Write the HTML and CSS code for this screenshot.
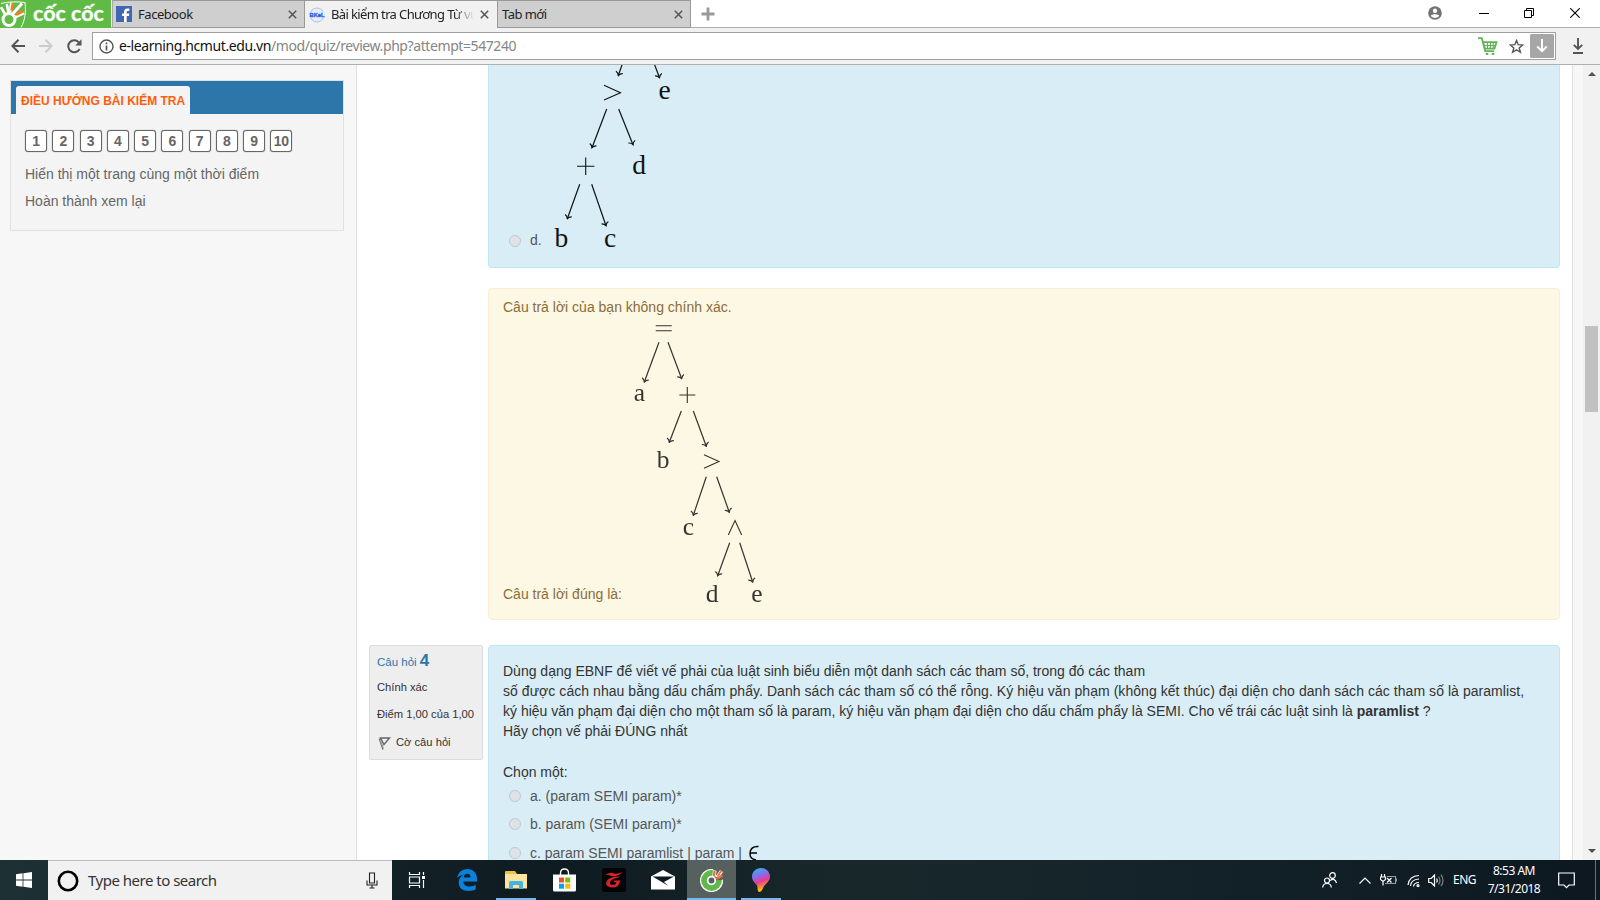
FILE: index.html
```html
<!DOCTYPE html>
<html lang="vi">
<head>
<meta charset="utf-8">
<title>Bài kiểm tra Chương Từ vựng</title>
<link rel="stylesheet" href="styles.css">
</head>
<body>
<div class="tabs">
  <div class="brand">
    <svg class="brand-hand" width="27" height="28" viewBox="0 0 27 28"><path d="M1 3.500C8 1.500 17 1.500 25 2.500c1.200 9 0 18-4 25" fill="none" stroke="#fff" stroke-width="1"/><path d="M1.500 8L5 14M7 5L8.500 13" stroke="#fff" stroke-width="2.600" stroke-linecap="round"/><path d="M10 12L11.500 2.500M13 13.500L22 3.500M15.500 17L24 13" stroke="#fff" stroke-width="3"/><circle cx="9" cy="19.500" r="6" fill="#5fbb46" stroke="#fff" stroke-width="3"/><path d="M11.700 10.500L13 3" stroke="#f47b20" stroke-width="2.800"/><path d="M16 14.800L23.500 11" stroke="#f47b20" stroke-width="2.800"/></svg>
    <svg width="84" height="28" viewBox="0 0 84 28"><text x="6" y="21" textLength="71" lengthAdjust="spacingAndGlyphs" class="brand-text">cốc cốc</text></svg>
  </div>
  <div class="tab tab-first"><svg width="16" height="16" viewBox="0 0 16 16"><path fill="#4267b2" d="M0 0h16v16H0z"/><path fill="#fff" d="M8 16V10H6V7.500h2V6c0-2.300 1.300-3.500 3.300-3.500h2V5H12c-1 0-1.300.5-1.300 1.300v1.200h2.600L13 10h-2.300v6z"/></svg><span class="tab-name t-fb">Facebook</span><svg class="x" width="9" height="9" viewBox="0 0 9 9"><path d="M.8.8l7.400 7.400M8.200.8L.8 8.200"/></svg></div>
  <div class="tab active"><svg width="16" height="16" viewBox="0 0 16 16"><circle cx="8" cy="8" r="7" fill="#e6edfb" stroke="#a9c0f5"/><path d="M0 5h16v6H0z" fill="#e6edfb"/><text x="0.500" y="10.300" textLength="15" lengthAdjust="spacingAndGlyphs" class="bkel">BKeL</text></svg><span class="tab-name t-bk">Bài kiểm tra Chương Từ vự</span><svg class="x" width="9" height="9" viewBox="0 0 9 9"><path d="M.8.8l7.400 7.400M8.200.8L.8 8.200"/></svg></div>
  <div class="tab tab-last"><span class="tab-name t-new">Tab mới</span><svg class="x" width="9" height="9" viewBox="0 0 9 9"><path d="M.8.8l7.400 7.400M8.200.8L.8 8.200"/></svg></div>
  <svg class="plus" width="14" height="14" viewBox="0 0 14 14"><path d="M7 .5v13M.5 7h13" stroke="#999" stroke-width="2.800"/></svg>
  <div class="winctl">
    <svg width="14" height="14" viewBox="0 0 14 14"><circle cx="7" cy="7" r="6.800" fill="#737373"/><circle cx="7" cy="4.700" r="2.200" fill="#fff"/><path d="M2.800 9.800C4 7.800 10 7.800 11.200 9.800 9.800 12.600 4.200 12.600 2.800 9.800z" fill="#fff"/></svg>
    <svg width="10" height="10" viewBox="0 0 10 10"><path d="M0 5.500h10" stroke="#000"/></svg>
    <svg width="10" height="10" viewBox="0 0 10 10"><path d="M.5 2.500h7v7h-7zM2.500 2V.5h7v7H8" fill="none" stroke="#000"/></svg>
    <svg width="10" height="10" viewBox="0 0 10 10"><path d="M.3.3l9.400 9.400M9.700.3L.3 9.700" stroke="#000" stroke-width="1.100"/></svg>
  </div>
</div>
<div class="toolbar">
  <svg class="back" width="14" height="14" viewBox="0 0 14 14"><path d="M14 7H1.500M7.500.8L1.300 7l6.200 6.200" fill="none" stroke="#555" stroke-width="2"/></svg>
  <svg class="fwd" width="14" height="14" viewBox="0 0 14 14"><path d="M0 7h12.500M6.500.8L12.700 7l-6.200 6.200" fill="none" stroke="#ccc" stroke-width="2"/></svg>
  <svg class="reload" width="15" height="15" viewBox="0 0 15 15"><path d="M12.600 10A6 6 0 1 1 11.800 3.300" fill="none" stroke="#555" stroke-width="2"/><path d="M14.500.3v6.200H8.300z" fill="#555"/></svg>
  <div class="omni">
    <svg width="15" height="15" viewBox="0 0 15 15"><circle cx="7.500" cy="7.500" r="6.500" fill="none" stroke="#555" stroke-width="1.400"/><path d="M7.500 3.500v1.700M7.500 6.500v5" stroke="#555" stroke-width="1.700"/></svg>
    <span class="url"><b>e-learning.hcmut.edu.vn</b>/mod/quiz/review.php?attempt=547240</span>
    <svg class="cart" width="20" height="19" viewBox="0 0 20 19"><path d="M0 1.200h3.800l3.400 13h9M5 5.200h13.500l-2 6.500H7z" fill="none" stroke="#62b356" stroke-width="1.800"/><path d="M6 8.500h11M9.500 5v7M12.500 5v7M15.200 5v7" stroke="#62b356" stroke-width="1.200"/><path d="M9 16v2M15 16v2" stroke="#62b356" stroke-width="2.500"/></svg>
    <svg class="star" width="15" height="15" viewBox="0 0 15 15"><path d="M7.500 1.500l1.700 4.200 4.500.3-3.500 2.900 1.200 4.400-3.900-2.400-3.900 2.400 1.200-4.400L1.300 6l4.500-.3z" fill="none" stroke="#555" stroke-width="1.400"/></svg>
    <svg width="24" height="24" viewBox="0 0 24 24"><rect width="24" height="24" rx="1.500" fill="#a6a6a6"/><path d="M12 5v12M7.300 12.500L12 17.200l4.700-4.700" fill="none" stroke="#fff" stroke-width="1.900"/></svg>
  </div>
  <svg class="dl" width="10" height="16" viewBox="0 0 10 16"><path d="M5 0v11M.8 6.800L5 11l4.200-4.200M0 15h10" fill="none" stroke="#555" stroke-width="1.900"/></svg>
</div>

<div class="page">
  <aside class="side">
    <section class="block">
      <header><h2>ĐIỀU HƯỚNG BÀI KIỂM TRA</h2></header>
      <div class="block-body">
        <div class="nums"><a>1</a><a>2</a><a>3</a><a>4</a><a>5</a><a>6</a><a>7</a><a>8</a><a>9</a><a>10</a></div>
        <p>Hiển thị một trang cùng một thời điểm</p>
        <p>Hoàn thành xem lại</p>
      </div>
    </section>
  </aside>
  <main>
    <div class="formulation top">
      <i class="radio"></i><span class="opt-d">d.</span>
      <svg class="tree" width="130" height="190" viewBox="550 65 130 190">
        <defs><marker id="h" viewBox="-5 -4 6 8" refX="0" refY="0" markerWidth="6" markerHeight="8" markerUnits="userSpaceOnUse" orient="auto"><path d="M-3.200-3.600Q-2.500-1 0 0-2.500 1-3.200 3.600" fill="none" stroke="#111" stroke-width="1.200"/></marker></defs>
        <g class="edges"><path d="M622 65L618.300 75.500"/><path d="M654.700 65L659.500 77.700"/><path d="M606.700 109L592 147.700"/><path d="M618.700 109L633 144.700"/><path d="M579.700 184.300L567.300 218.700"/><path d="M591.700 184.300L606 225.700"/></g>
        <path class="op" d="M604 85.300L620.500 92.700 604 100M577 166.300h17.400M585.700 157.600V175"/>
        <g class="nodes"><text x="664.700" y="99.300">e</text><text x="639" y="173.500">d</text><text x="561.300" y="247.300">b</text><text x="610" y="247.300">c</text></g>
      </svg>
    </div>
    <div class="feedback">
      <p>Câu trả lời của bạn không chính xác.</p>
      <div class="right-answer"><span>Câu trả lời đúng là:</span>
      <svg class="tree t2" width="150" height="292" viewBox="622 318 150 292">
        <g class="edges"><path d="M659 342.300L644.300 382"/><path d="M668 342.300L681.700 378.700"/><path d="M681.300 411L669.300 442.300"/><path d="M693.300 411L706.300 446.300"/><path d="M706.300 476.700L693.300 515.300"/><path d="M716.700 476.700L729.300 512.300"/><path d="M729.700 542.700L717.700 575.700"/><path d="M739.700 542.700L752.700 582"/></g>
        <path class="op" d="M655.700 325.700h16M655.700 330.700h16M679.300 395h16M687.300 387v16M704 454.700L719 461.500 704 468.300M728.300 535L735 520.500 741.700 535"/>
        <g class="nodes"><text x="639.300" y="401.300">a</text><text x="663" y="467.700">b</text><text x="688.300" y="534.700">c</text><text x="712" y="601.700">d</text><text x="757" y="601.700">e</text></g>
      </svg></div>
    </div>
    <div class="question">
      <div class="info">
        <h3>Câu hỏi <b>4</b></h3>
        <p class="state">Chính xác</p>
        <p class="grade">Điểm 1,00 của 1,00</p>
        <p class="flag"><svg width="13" height="13" viewBox="0 0 13 13"><path d="M1.300 1.500l3.700 11M2.500 1h9L6 7.500z" fill="none" stroke="#666" stroke-width="1.400"/><path d="M2 2.500l3 8" stroke="#999" stroke-width="1.500"/></svg><span>Cờ câu hỏi</span></p>
      </div>
      <div class="formulation q4">
        <p class="qtext"><span class="l1">Dùng dạng EBNF để viết vế phải của luật sinh biểu diễn một danh sách các tham số, trong đó các tham</span><br><span class="l2">số được cách nhau bằng dấu chấm phẩy. Danh sách các tham số có thể rỗng. Ký hiệu văn phạm (không kết thúc) đại diện cho danh sách các tham số là paramlist,</span><br><span class="l3">ký hiệu văn phạm đại diện cho một tham số là param, ký hiệu văn phạm đại diện cho dấu chấm phẩy là SEMI. Cho vế trái các luật sinh là <b>paramlist</b> ?</span><br>Hãy chọn vế phải ĐÚNG nhất</p>
        <p class="choose">Chọn một:</p>
        <div class="opt"><i class="radio"></i>a. (param SEMI param)*</div>
        <div class="opt"><i class="radio"></i>b. param (SEMI param)*</div>
        <div class="opt"><i class="radio"></i>c. param SEMI paramlist | param | <svg class="eps" width="12" height="16" viewBox="0 0 12 16"><path d="M10.500 1.500C5 1 2 4 2 8.500S4 14 8 15M2 8h7" fill="none" stroke="#000" stroke-width="1.500"/></svg></div>
      </div>
    </div>
  </main>
  <div class="scroll">
    <svg width="8" height="4" viewBox="0 0 8 4"><path d="M0 4L4 0l4 4z" fill="#505050"/></svg>
    <div class="thumb"></div>
    <svg width="8" height="4" viewBox="0 0 8 4"><path d="M0 0l4 4 4-4z" fill="#505050"/></svg>
  </div>
</div>

<footer class="taskbar">
  <div class="start"><svg width="16" height="16" viewBox="0 0 16 16"><path fill="#fff" d="M0 2.200L6.600 1.300v6.200H0zM7.400 1.200L16 0v7.500H7.400zM0 8.400h6.600v6.300L0 13.800zM7.400 8.400H16V16l-8.600-1.200z"/></svg></div>
  <div class="search"><svg width="22" height="22" viewBox="0 0 22 22"><circle cx="11" cy="11" r="9.200" fill="none" stroke="#000" stroke-width="2.600"/></svg><span>Type here to search</span><svg width="12" height="17" viewBox="0 0 12 17"><path d="M3.500 1h5v10h-5zM1 8.500V13h10V8.500M6 13v3.500M3.500 16h5" fill="none" stroke="#222" stroke-width="1.100"/></svg></div>
  <div class="app first"><svg width="17" height="16" viewBox="0 0 17 16"><path d="M1.500 0v2.500h10V0M1.500 5h10v6h-10zM1.500 16v-2.500h10V16M15.500 0v3M15.500 8v8" fill="none" stroke="#fff" stroke-width="1.200"/><path d="M14 4h3v3h-3z" fill="#fff"/></svg></div>
  <div class="app"><svg width="20" height="22" viewBox="0 0 20 22"><path fill="#0b80dc" d="M0 9.500C1 3.500 5 0 10.500 0 16.500 0 20 4.500 20 9.500V12.500H6.300C6.500 16 9 17.500 12.500 17.500c2.500 0 4.500-.7 6.200-1.700v4.500C17 21.300 14.500 22 11.500 22 5.500 22 1.700 18.500 1.700 13.500 1.700 10 3.500 7.500 6.500 6 3.500 6 1.200 7.500 0 9.500zM6.600 8.500h7C13.500 6 12.300 4.700 10.300 4.700 8.300 4.700 7 6.300 6.600 8.500z"/></svg></div>
  <div class="app run"><svg width="22" height="18" viewBox="0 0 22 18"><path fill="#f0c14b" d="M0 1q0-1 1-1h9l2 3h9v3H0z"/><path fill="#ffe59b" d="M0 3h22v14.500H0z"/><path fill="#41b5e8" d="M4 18v-6.500Q4 10 5.500 10h11q1.500 0 1.500 1.500V18h-4v-4H8v4z"/></svg></div>
  <div class="app"><svg width="23" height="24" viewBox="0 0 23 24"><path d="M7.500 7V5q0-4 4-4t4 4v2" fill="none" stroke="#fff" stroke-width="1.300"/><path fill="#fff" d="M0 6.500h23V22q0 1.500-1.500 1.500h-20Q0 23.500 0 22z"/><path fill="#f25022" d="M6 9.500h5v5H6z"/><path fill="#7fba00" d="M12.200 9.500h5v5h-5z"/><path fill="#00a4ef" d="M6 15.700h5v5H6z"/><path fill="#ffb900" d="M12.200 15.700h5v5h-5z"/></svg></div>
  <div class="app"><svg width="24" height="24" viewBox="0 0 24 24"><rect width="24" height="24" rx="2" fill="#050505"/><path d="M20.500 4Q15 7 10 5 6 4.500 3.500 6.500q3.500 0 5.500 1.500 6 1.500 11.500-4zM18.500 8.500Q9 8.500 6 11.500 2.500 15.500 5.500 18q4.500 3 10.500 0l2.500-5.500h-6l-1 1.700h2.800l-.8 2q-4 1.300-5.500-.5-.5-3.500 4-5 4-.7 6.500-2.200z" fill="#d8232a"/></svg></div>
  <div class="app"><svg width="24" height="20" viewBox="0 0 24 20"><path fill="#fff" d="M0 6.500L12 0l12 6.500V19.500H0z"/><path fill="#0e1a20" d="M1.500 6.500h21.500L13 12l4.500 4L10 11.500z"/></svg></div>
  <div class="app run wide"><svg width="24" height="24" viewBox="0 0 24 24"><circle cx="11.500" cy="12.500" r="11" fill="#62b84b" stroke="#fff" stroke-width="1.200"/><path d="M12.200 9L13.500 0H24v11.500l-9 1z" fill="#56605f"/><circle cx="11.500" cy="12.500" r="3.800" fill="#56605f" stroke="#fff" stroke-width="1.800"/><path d="M14 8.300L14.800 2.500M17 9.500l4.500-6.500" stroke="#fff" stroke-width="3.600"/><path d="M13.900 7.800L14.600 3M16.500 11l6-3.500" stroke="#f26b32" stroke-width="2.200"/><path d="M17.500 8.500l4-6" stroke="#f26b32" stroke-width="1.800"/></svg></div>
  <div class="app run"><svg width="18" height="24" viewBox="0 0 18 24"><defs><linearGradient id="p" x2="0.300" y2="1"><stop stop-color="#19c4f3"/><stop offset=".4" stop-color="#8a6be8"/><stop offset=".65" stop-color="#e83a94"/><stop offset="1" stop-color="#ffc400"/></linearGradient></defs><path fill="url(#p)" d="M9 0c5 0 9 4 9 8.500 0 5-4.500 7-6.500 10.500C10.500 21 9.500 24 7.500 24 5 24 6 20 5 17.500 3.500 15 0 13 0 8.500 0 4 4 0 9 0z"/></svg></div>
  <div class="tray">
    <svg class="people" width="15" height="16" viewBox="0 0 15 16"><circle cx="10.500" cy="3.500" r="2.800"/><path d="M8 8.500q5-3 6.500 2.500"/><circle cx="5" cy="8.500" r="2.500"/><path d="M.7 15.500Q1 11.500 5 11.500t4.300 4"/></svg>
    <svg class="chev" width="12" height="7" viewBox="0 0 12 7"><path d="M.5 6.500L6 1l5.500 5.500"/></svg>
    <svg class="bat" width="17" height="12" viewBox="0 0 17 12"><path d="M1.500 0v3M4.500 0v3M.5 3h5v2.500L3 7.500.5 5.500zM3 7v4.500"/><path d="M7 2.500h8.500v7H5M16.500 4.500v3" opacity=".55"/><path d="M7 4l4.500 4.500M11.500 4L7 8.500"/></svg>
    <svg class="wifi" width="13" height="13" viewBox="0 0 13 13"><path d="M1 11Q2 2 12 1.500M3.500 12Q4 5.500 12 5M6.500 12.500Q7 8.500 12 8.500"/><circle cx="11" cy="11.500" r="1" fill="#fff"/></svg>
    <svg class="vol" width="16" height="13" viewBox="0 0 16 13"><path d="M.7 4.500h2.500L6.500 1v11L3.200 8.500H.7zM8.500 4.500q1.500 2 0 4"/><path d="M10.500 2.500q3 4 0 8M13 .7q4 6 0 11.500" opacity=".45"/></svg>
    <span class="lang">ENG</span>
    <div class="clock"><span class="time">8:53 AM</span><span class="date">7/31/2018</span></div>
    <svg class="note" width="17" height="17" viewBox="0 0 17 17"><path d="M.7 1h15.600v12H11l-2.500 2.700L6 13H.7z"/></svg>
    <i class="edge"></i>
  </div>
</footer>
</body>
</html>
```
FILE: styles.css
```css
* { box-sizing: border-box; }
body { margin: 0; width: 1600px; height: 900px; overflow: hidden; display: flex; flex-direction: column; background: #fff; font: 14px/20px "Liberation Sans", Arial, sans-serif; color: #333; }
p, h2, h3 { margin: 0; }
svg { display: block; flex: none; }

.tabs { height: 28px; flex: none; display: flex; border-bottom: 1px solid #b0b0b0; font: 13px/18px "Noto Sans", "Open Sans", sans-serif; color: #222; }
.brand { width: 111px; height: 28px; background: #5fbb46; display: flex; flex: none; }
.brand-hand { width: 27px; }
.brand-text { font: 700 20px Lato, "Noto Sans", sans-serif; fill: #fff; stroke: #fff; stroke-width: .3; }
.bkel { font: bold 6px "Liberation Sans", sans-serif; fill: #2459e8; stroke: #2459e8; stroke-width: .3; }
.tab { height: 28px; flex: none; display: flex; align-items: center; background: #cfcfcf; border: 1px solid #999; border-left-color: #aaa; padding: 0 8px 0 3px; }
.tab-first { width: 193px; margin-left: 1px; padding-right: 7px; }
.tab.active { width: 193px; background: #f1f1f1; border-bottom: 0; border-left: 0; padding-left: 4px; }
.tab-last { width: 193px; border-left: 0; padding-left: 4px; padding-right: 7px; }
.tab-name { flex: 1; white-space: nowrap; overflow: hidden; margin-left: 6px; padding-bottom: 1px; }
.tab-last .tab-name { margin-left: 0; }
.t-fb { letter-spacing: -.45px; }
.t-bk { flex: none; width: 143px; margin-left: 6px; margin-right: 6px; letter-spacing: -.62px; -webkit-mask-image: linear-gradient(90deg, #000 86%, transparent); }
.t-new { letter-spacing: -.55px; }
.x path { stroke: #555; stroke-width: 1.5; }
.plus { margin: 7px 0 0 10px; }
.winctl { margin-left: auto; display: flex; align-items: center; padding-right: 20px; height: 26px; }
.winctl svg:nth-child(2) { margin-left: 37px; }
.winctl svg:nth-child(3) { margin-left: 35px; }
.winctl svg:nth-child(4) { margin-left: 36px; }

.toolbar { height: 37px; flex: none; background: #f1f1f1; border-bottom: 1px solid #b0b0b0; display: flex; align-items: center; padding-left: 11px; }
.fwd { margin-left: 14px; }
.reload { margin-left: 14px; }
.omni { width: 1464px; height: 28px; margin-left: 10px; margin-right: 17px; flex: none; background: #fff; border: 1px solid #a0a0a0; display: flex; align-items: center; padding: 0 1px 0 6px; }
.url { flex: 1; margin-left: 5px; font: 14px/20px "Noto Sans", "Open Sans", sans-serif; letter-spacing: -.41px; color: #858585; white-space: nowrap; }
.url b { font-weight: 400; color: #111; }
.cart { margin-right: 1px; }
.star { margin: 0 6px 0 10px; }

.page { height: 795px; flex: none; display: flex; background: #f7f7f7; overflow: hidden; }
.side { width: 357px; flex: none; border-right: 1px solid #e1e1e1; padding: 15px 0 0 10px; }
.block { width: 334px; height: 151px; border: 1px solid #e1e1e1; background: #f4f4f4; }
.block header { height: 33px; background: #2d76aa; padding: 5px 0 0 5px; }
.block h2 { display: inline-block; width: 174px; height: 28px; border-radius: 3px 3px 0 0; background: #f4f4f4; color: #ff5d0d; font-size: 12px; line-height: 30px; padding-left: 5px; white-space: nowrap; }
.block-body { padding: 16px 14px; color: #666; }
.nums { display: flex; gap: 5.250px; margin-bottom: 12px; }
.nums a { width: 22px; height: 22px; border: 1px solid #666; box-shadow: 0 0 1px #666; border-radius: 3px; background: #fff; font-weight: 700; text-align: center; line-height: 20px; flex: none; letter-spacing: -.3px; }
.block-body p { margin-bottom: 7px; }

main { width: 1216px; flex: none; background: #fff; border-right: 1px solid #e1e1e1; padding-right: 12px; }
.formulation { background: #d9edf6; border: 1px solid #bce8f1; border-radius: 4px; }
.top { margin-left: 131px; height: 203px; border-top: 0; border-radius: 0 0 4px 4px; display: flex; align-items: flex-end; padding: 0 0 12px 20px; color: #555; }
.radio { display: inline-block; width: 12px; height: 12px; border: 1px solid #c2c7ca; border-radius: 50%; background: #dde3e6; flex: none; }
.top .radio { margin-bottom: 8px; }
.opt-d { margin: 0 0 5px 9px; width: 20px; }
.edges path { stroke: #111; stroke-width: 1.200; marker-end: url(#h); fill: none; }
.op { fill: none; stroke: #111; stroke-width: 1.100; }
.nodes { font: 27.500px "Liberation Serif", serif; fill: #111; text-anchor: middle; }
.t2 .nodes { font-size: 25.500px; }
.t2 { opacity: .85; }
.feedback { margin: 20px 0 0 131px; height: 332px; border: 1px solid #fbeed5; border-radius: 4px; background: #fcf8e3; color: #8a6d3b; padding: 8px 14px 0; }
.feedback p { margin-bottom: 1px; }
.right-answer { display: flex; align-items: flex-end; }
.right-answer span { width: 119px; margin-bottom: 6px; white-space: nowrap; }
.question { display: flex; margin: 25px 0 0 12px; align-items: flex-start; }
.info { width: 114px; height: 115px; flex: none; border: 1px solid #dcdcdc; border-radius: 2px; background: #eee; padding: 5px 0 0 7px; font-size: 11.200px; white-space: nowrap; }
.info h3 { font-size: 11.500px; font-weight: 400; color: #2d76aa; line-height: 20px; }
.info h3 b { font-size: 17px; }
.state { margin-top: 5px; }
.grade { margin-top: 7px; }
.flag { display: flex; margin-top: 8px; align-items: center; }
.flag svg { margin: 3px 5px 0 1px; }
.q4 { flex: 1; height: 240px; margin-left: 5px; padding: 15px 14px 0; }
.qtext { white-space: nowrap; }
.l2 { letter-spacing: .053px; }
.choose { margin-top: 21px; }
.opt { display: flex; align-items: center; color: #555; margin: 4px 0 8px 6px; white-space: pre; }
.opt .radio { margin-right: 9px; }
.opt + .opt { margin-top: 0; }
.opt:last-child { margin-top: 9px; }
.eps { margin-left: 2px; }

.scroll { width: 17px; margin-left: auto; background: #f1f1f1; display: flex; flex-direction: column; align-items: center; padding: 7px 0; flex: none; }
.thumb { width: 13px; height: 86px; margin-top: 250px; margin-bottom: auto; background: #c1c1c1; }

.taskbar { height: 40px; flex: none; background: linear-gradient(90deg, #1d3033, #0e1b21 35%, #18282a 52%, #14242a 70%, #0d1820); display: flex; color: #fff; font-family: "Noto Sans", "Open Sans", sans-serif; }
.start { width: 48px; display: flex; align-items: center; justify-content: center; }
.search { width: 344px; background: #f1f1f1; border-top: 1px solid #bbb; display: flex; align-items: center; padding: 0 14px 0 9px; color: #333; }
.search span { flex: 1; margin-left: 9px; padding-bottom: 1px; font-size: 15px; letter-spacing: -.5px; white-space: nowrap; }
.app { width: 49px; height: 40px; display: flex; align-items: center; justify-content: center; background: linear-gradient(#76b9ed, #76b9ed) 50% 100% / 0 2px no-repeat; }
.first { width: 50px; padding-right: 2px; }
.run { background-size: 40px 2px; }
.wide { background-color: #56605f; background-size: 100% 2px; }
.tray { margin-left: auto; display: flex; align-items: center; height: 40px; }
.tray path, .tray circle { fill: none; stroke: #fff; stroke-width: 1.200; }
.chev { margin-left: 22px; }
.bat { margin-left: 9px; }
.wifi { margin-left: 10px; }
.vol { margin-left: 8px; }
.lang { width: 24px; margin-left: 9px; font-size: 12px; letter-spacing: -.5px; }
.clock { width: 54px; margin-left: 10px; display: flex; flex-direction: column; align-items: center; font-size: 12px; line-height: 18px; letter-spacing: -.5px; white-space: nowrap; }
.note { margin-left: 17px; }
.edge { width: 1px; height: 40px; background: #68737a; margin: 0 4px 0 20px; }
```
